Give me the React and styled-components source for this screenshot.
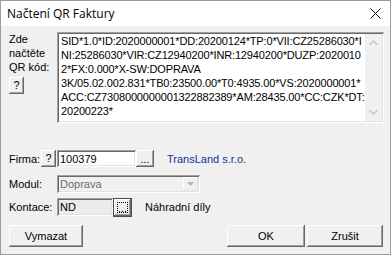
import React from "react"
import styled, { createGlobalStyle } from "styled-components"

const GlobalStyle = createGlobalStyle`
  html, body {
    margin: 0;
    padding: 0;
    background: #f0f0f0;
  }
  body {
    font-family: "Liberation Sans", Arial, sans-serif;
    font-size: 11px;
    color: #000;
  }
  * {
    box-sizing: border-box;
  }
`

const raised = `
  background: #f0f0f0;
  box-shadow: inset -1px -1px #696969, inset 1px 1px #fff,
    inset -2px -2px #a0a0a0, inset 2px 2px #f0f0f0;
`

const sunken = `
  box-shadow: inset 1px 1px #a0a0a0, inset -1px -1px #fff,
    inset 2px 2px #696969, inset -2px -2px #e3e3e3;
`

const qrLines = [
  "SID*1.0*ID:2020000001*DD:20200124*TP:0*VII:CZ25286030*I",
  "NI:25286030*VIR:CZ12940200*INR:12940200*DUZP:2020010",
  "2*FX:0.000*X-SW:DOPRAVA",
  "3K/05.02.002.831*TB0:23500.00*T0:4935.00*VS:2020000001*",
  "ACC:CZ7308000000001322882389*AM:28435.00*CC:CZK*DT:",
  "20200223*",
]

const App = () => (
  <>
    <GlobalStyle />
    <Window>
      <TitleBar>
        <Title>Načtení QR Faktury</Title>
        <svg width="11" height="11" viewBox="0 0 11 11">
          <path d="M0.5 0.5 L10.5 10.5 M10.5 0.5 L0.5 10.5" stroke="#111" strokeWidth="1" />
        </svg>
      </TitleBar>
      <Client>
        <TopSection>
          <Prompt>
            <PromptText>
              Zde
              <br />
              načtěte
              <br />
              QR kód:
            </PromptText>
            <HelpButton $mt={3}>?</HelpButton>
          </Prompt>
          <QrBox>
            <QrText>
              {qrLines.map((line, i) => (
                <div key={i}>{line}</div>
              ))}
            </QrText>
            <ScrollBar>
              <svg width="9" height="6" viewBox="0 0 9 6">
                <path d="M0.5 5 L4.5 1 L8.5 5" fill="none" stroke="#c4c4c4" strokeWidth="1.3" />
              </svg>
              <svg width="9" height="6" viewBox="0 0 9 6">
                <path d="M0.5 1 L4.5 5 L8.5 1" fill="none" stroke="#c4c4c4" strokeWidth="1.3" />
              </svg>
            </ScrollBar>
          </QrBox>
        </TopSection>

        <FieldRow $h={17} $mt={27}>
          <FieldLabel $w={32}>Firma:</FieldLabel>
          <HelpButton>?</HelpButton>
          <TextField $w={79}>100379</TextField>
          <DotsButton>...</DotsButton>
          <CompanyName>TransLand s.r.o.</CompanyName>
        </FieldRow>

        <FieldRow $h={18} $mt={8}>
          <FieldLabel>Modul:</FieldLabel>
          <SelectBox>
            <SelectText>Doprava</SelectText>
            <SelectArrow>
              <svg width="7" height="4" viewBox="0 0 7 4">
                <path d="M0 0 L7 0 L3.5 4 Z" fill="#b4b4b4" />
              </svg>
            </SelectArrow>
          </SelectBox>
        </FieldRow>

        <FieldRow $h={18} $mt={5}>
          <FieldLabel>Kontace:</FieldLabel>
          <TextField $w={56} $disabled>
            ND
          </TextField>
          <DotsButton $focused>...</DotsButton>
          <PlainText>Náhradní díly</PlainText>
        </FieldRow>

        <ButtonRow>
          <PushButton $w={74}>Vymazat</PushButton>
          <PushButton $w={78} $push>
            OK
          </PushButton>
          <PushButton $w={76}>Zrušit</PushButton>
        </ButtonRow>
      </Client>
    </Window>
  </>
)

const Window = styled.div`
  width: 391px;
  height: 255px;
  border: 1px solid #9c9c9c;
  display: flex;
  flex-direction: column;
  background: #f0f0f0;
  overflow: hidden;
`

const TitleBar = styled.div`
  height: 25px;
  flex: none;
  background: #fff;
  display: flex;
  align-items: center;
  justify-content: space-between;
  padding: 0 9px 0 6px;
`

const Title = styled.span`
  font-family: "Open Sans", "Noto Sans", sans-serif;
  font-size: 12px;
  color: #000;
`

const Client = styled.div`
  flex: 1;
  display: flex;
  flex-direction: column;
  padding: 5px 6px 7px 8px;
`

const TopSection = styled.div`
  display: flex;
  align-items: flex-start;
`

const Prompt = styled.div`
  width: 48px;
  flex: none;
  display: flex;
  flex-direction: column;
  align-items: flex-start;
`

const PromptText = styled.div`
  line-height: 14px;
  padding-top: 1px;
`

const HelpButton = styled.div`
  ${raised}
  width: 15px;
  height: 17px;
  flex: none;
  margin-top: ${p => p.$mt || 0}px;
  display: flex;
  align-items: center;
  justify-content: center;
  padding-bottom: 1px;
`

const QrBox = styled.div`
  ${sunken}
  margin-top: 1px;
  width: 327px;
  height: 91px;
  flex: none;
  background: #fff;
  padding: 2px;
  display: flex;
`

const QrText = styled.div`
  flex: 1;
  padding-left: 2px;
  line-height: 14px;
  white-space: pre;
  letter-spacing: -0.15px;
  overflow: hidden;
`

const ScrollBar = styled.div`
  width: 17px;
  flex: none;
  background: #f0f0f0;
  display: flex;
  flex-direction: column;
  align-items: center;
  justify-content: space-between;
  padding: 6px 0;
`

const FieldRow = styled.div`
  display: flex;
  align-items: center;
  height: ${p => p.$h}px;
  margin-top: ${p => p.$mt}px;
`

const FieldLabel = styled.div`
  width: ${p => p.$w || 48}px;
  flex: none;
  white-space: nowrap;
`

const TextField = styled.div`
  ${sunken}
  width: ${p => p.$w}px;
  height: 100%;
  flex: none;
  background: ${p => (p.$disabled ? "#ebebeb" : "#fff")};
  padding: 0 3px;
  display: flex;
  align-items: center;
  margin-left: ${p => (p.$disabled ? 0 : 1)}px;
`

const DotsButton = styled.div`
  ${raised}
  position: relative;
  width: ${p => (p.$focused ? 19 : 18)}px;
  height: ${p => (p.$focused ? 19 : 17)}px;
  flex: none;
  display: flex;
  align-items: flex-end;
  justify-content: center;
  padding-bottom: 2px;
  line-height: 11px;
  ${p =>
    p.$focused &&
    `
    border: 1px solid #4d4d4d;
    &::after {
      content: "";
      position: absolute;
      inset: 3px;
      border: 1px dotted #000;
    }
  `}
`

const CompanyName = styled.div`
  margin-left: 13px;
  color: #14329a;
  white-space: nowrap;
`

const PlainText = styled.div`
  margin-left: 13px;
  white-space: nowrap;
`

const SelectBox = styled.div`
  ${sunken}
  width: 143px;
  height: 100%;
  background: #f0f0f0;
  padding: 2px;
  display: flex;
  align-items: stretch;
`

const SelectText = styled.div`
  flex: 1;
  color: #6d6d6d;
  padding-left: 1px;
  display: flex;
  align-items: center;
`

const SelectArrow = styled.div`
  width: 15px;
  flex: none;
  display: flex;
  align-items: center;
  justify-content: center;
  background: #f0f0f0;
  box-shadow: inset -1px -1px #e3e3e3, inset 1px 1px #fff;
`

const ButtonRow = styled.div`
  display: flex;
  gap: 2px;
  margin-top: 9px;
  margin-right: 1px;
`

const PushButton = styled.div`
  ${raised}
  width: ${p => p.$w}px;
  height: 22px;
  display: flex;
  align-items: center;
  justify-content: center;
  margin-left: ${p => (p.$push ? "auto" : 0)};
`

export default App
